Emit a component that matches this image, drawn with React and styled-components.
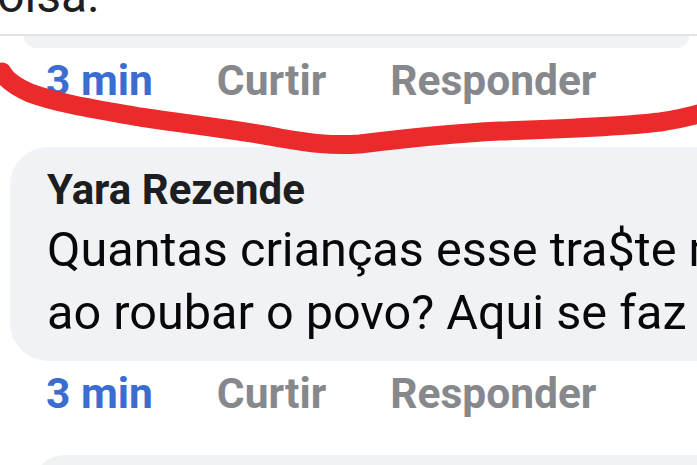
import React from 'react';
import styled, { createGlobalStyle } from 'styled-components';

const GlobalStyle = createGlobalStyle`
  html, body {
    margin: 0;
    padding: 0;
    background: #ffffff;
  }
  body {
    font-family: Roboto, "Noto Sans", "Liberation Sans", sans-serif;
    overflow: hidden;
  }
`;

const comments = [
  {
    id: 1,
    name: 'Yara Rezende',
    lines: ['Quantas crianças esse tra$te matou', 'ao roubar o povo? Aqui se faz aqui se paga'],
    time: '3 min',
  },
];

const App = () => {
  return (
    <>
      <GlobalStyle />
      <Screen>
        <PostText>coisa.</PostText>
        <Divider />
        <PrevBubble />
        <Actions time="3 min" />

        {comments.map((c) => (
          <React.Fragment key={c.id}>
            <Bubble>
              <Author>{c.name}</Author>
              {c.lines.map((line) => (
                <BodyLine key={line}>{line}</BodyLine>
              ))}
            </Bubble>
            <Actions time={c.time} />
          </React.Fragment>
        ))}

        <NextBubble />
        <Scribble />
      </Screen>
    </>
  );
};

const Actions = ({ time }) => (
  <ActionRow>
    <ActionLink $blue>{time}</ActionLink>
    <ActionLink>Curtir</ActionLink>
    <ActionLink>Responder</ActionLink>
  </ActionRow>
);

// the red marker stroke someone drew over the screenshot
const Scribble = () => (
  <Marker width="697" height="465" viewBox="0 0 697 465">
    <path
      d="M2 72 C 6 80, 14 86, 30 93 C 60 104, 100 110, 140 117 C 200 126, 240 130, 280 138 C 310 143, 330 146, 360 144 C 400 139, 440 134, 500 131 C 560 129, 620 127, 660 122 C 680 119, 692 116, 705 112"
      fill="none"
      stroke="#ea2a2b"
      strokeWidth="19"
      strokeLinecap="round"
      strokeLinejoin="round"
    />
    <ellipse cx="2" cy="72" rx="7" ry="9" fill="#ea2a2b" />
  </Marker>
);

const Screen = styled.div`
  position: relative;
  width: 697px;
  height: 465px;
  overflow: hidden;
  background: #ffffff;
`;

const PostText = styled.div`
  height: 48px;
  margin: -28px 0 0 -28px;
  font-size: 48px;
  line-height: 48px;
  color: #1c1e21;
  white-space: nowrap;
`;

const Divider = styled.div`
  height: 2px;
  margin-top: 14px;
  background: #e2e4e7;
`;

const PrevBubble = styled.div`
  height: 12px;
  margin: 0 8px 0 24px;
  background: #f0f2f4;
  border-radius: 0 0 22px 22px;
`;

const ActionRow = styled.div`
  display: flex;
  align-items: center;
  gap: 64px;
  height: 50px;
  margin-top: 8px;
  padding-left: 46px;
`;

const ActionLink = styled.span`
  font-size: 42.5px;
  line-height: 50px;
  font-weight: 700;
  color: ${(p) => (p.$blue ? '#3b6ccf' : '#86888c')};
  white-space: nowrap;
`;

const Bubble = styled.div`
  margin: 41px -80px 0 10px;
  padding: 18px 0 17px 37px;
  background: #f0f2f5;
  border-radius: 38px;
  overflow: hidden;
`;

const Author = styled.div`
  font-size: 42px;
  line-height: 50px;
  font-weight: 700;
  color: #1c1e21;
  margin-bottom: 3px;
  white-space: nowrap;
`;

const BodyLine = styled.div`
  font-size: 48.6px;
  line-height: 63px;
  color: #080808;
  white-space: nowrap;
`;

const NextBubble = styled.div`
  height: 60px;
  margin: 36px -40px 0 34px;
  background: #f0f2f5;
  border-radius: 30px 30px 0 0;
`;

const Marker = styled.svg`
  position: absolute;
  left: 0;
  top: 0;
  pointer-events: none;
`;

export default App;
